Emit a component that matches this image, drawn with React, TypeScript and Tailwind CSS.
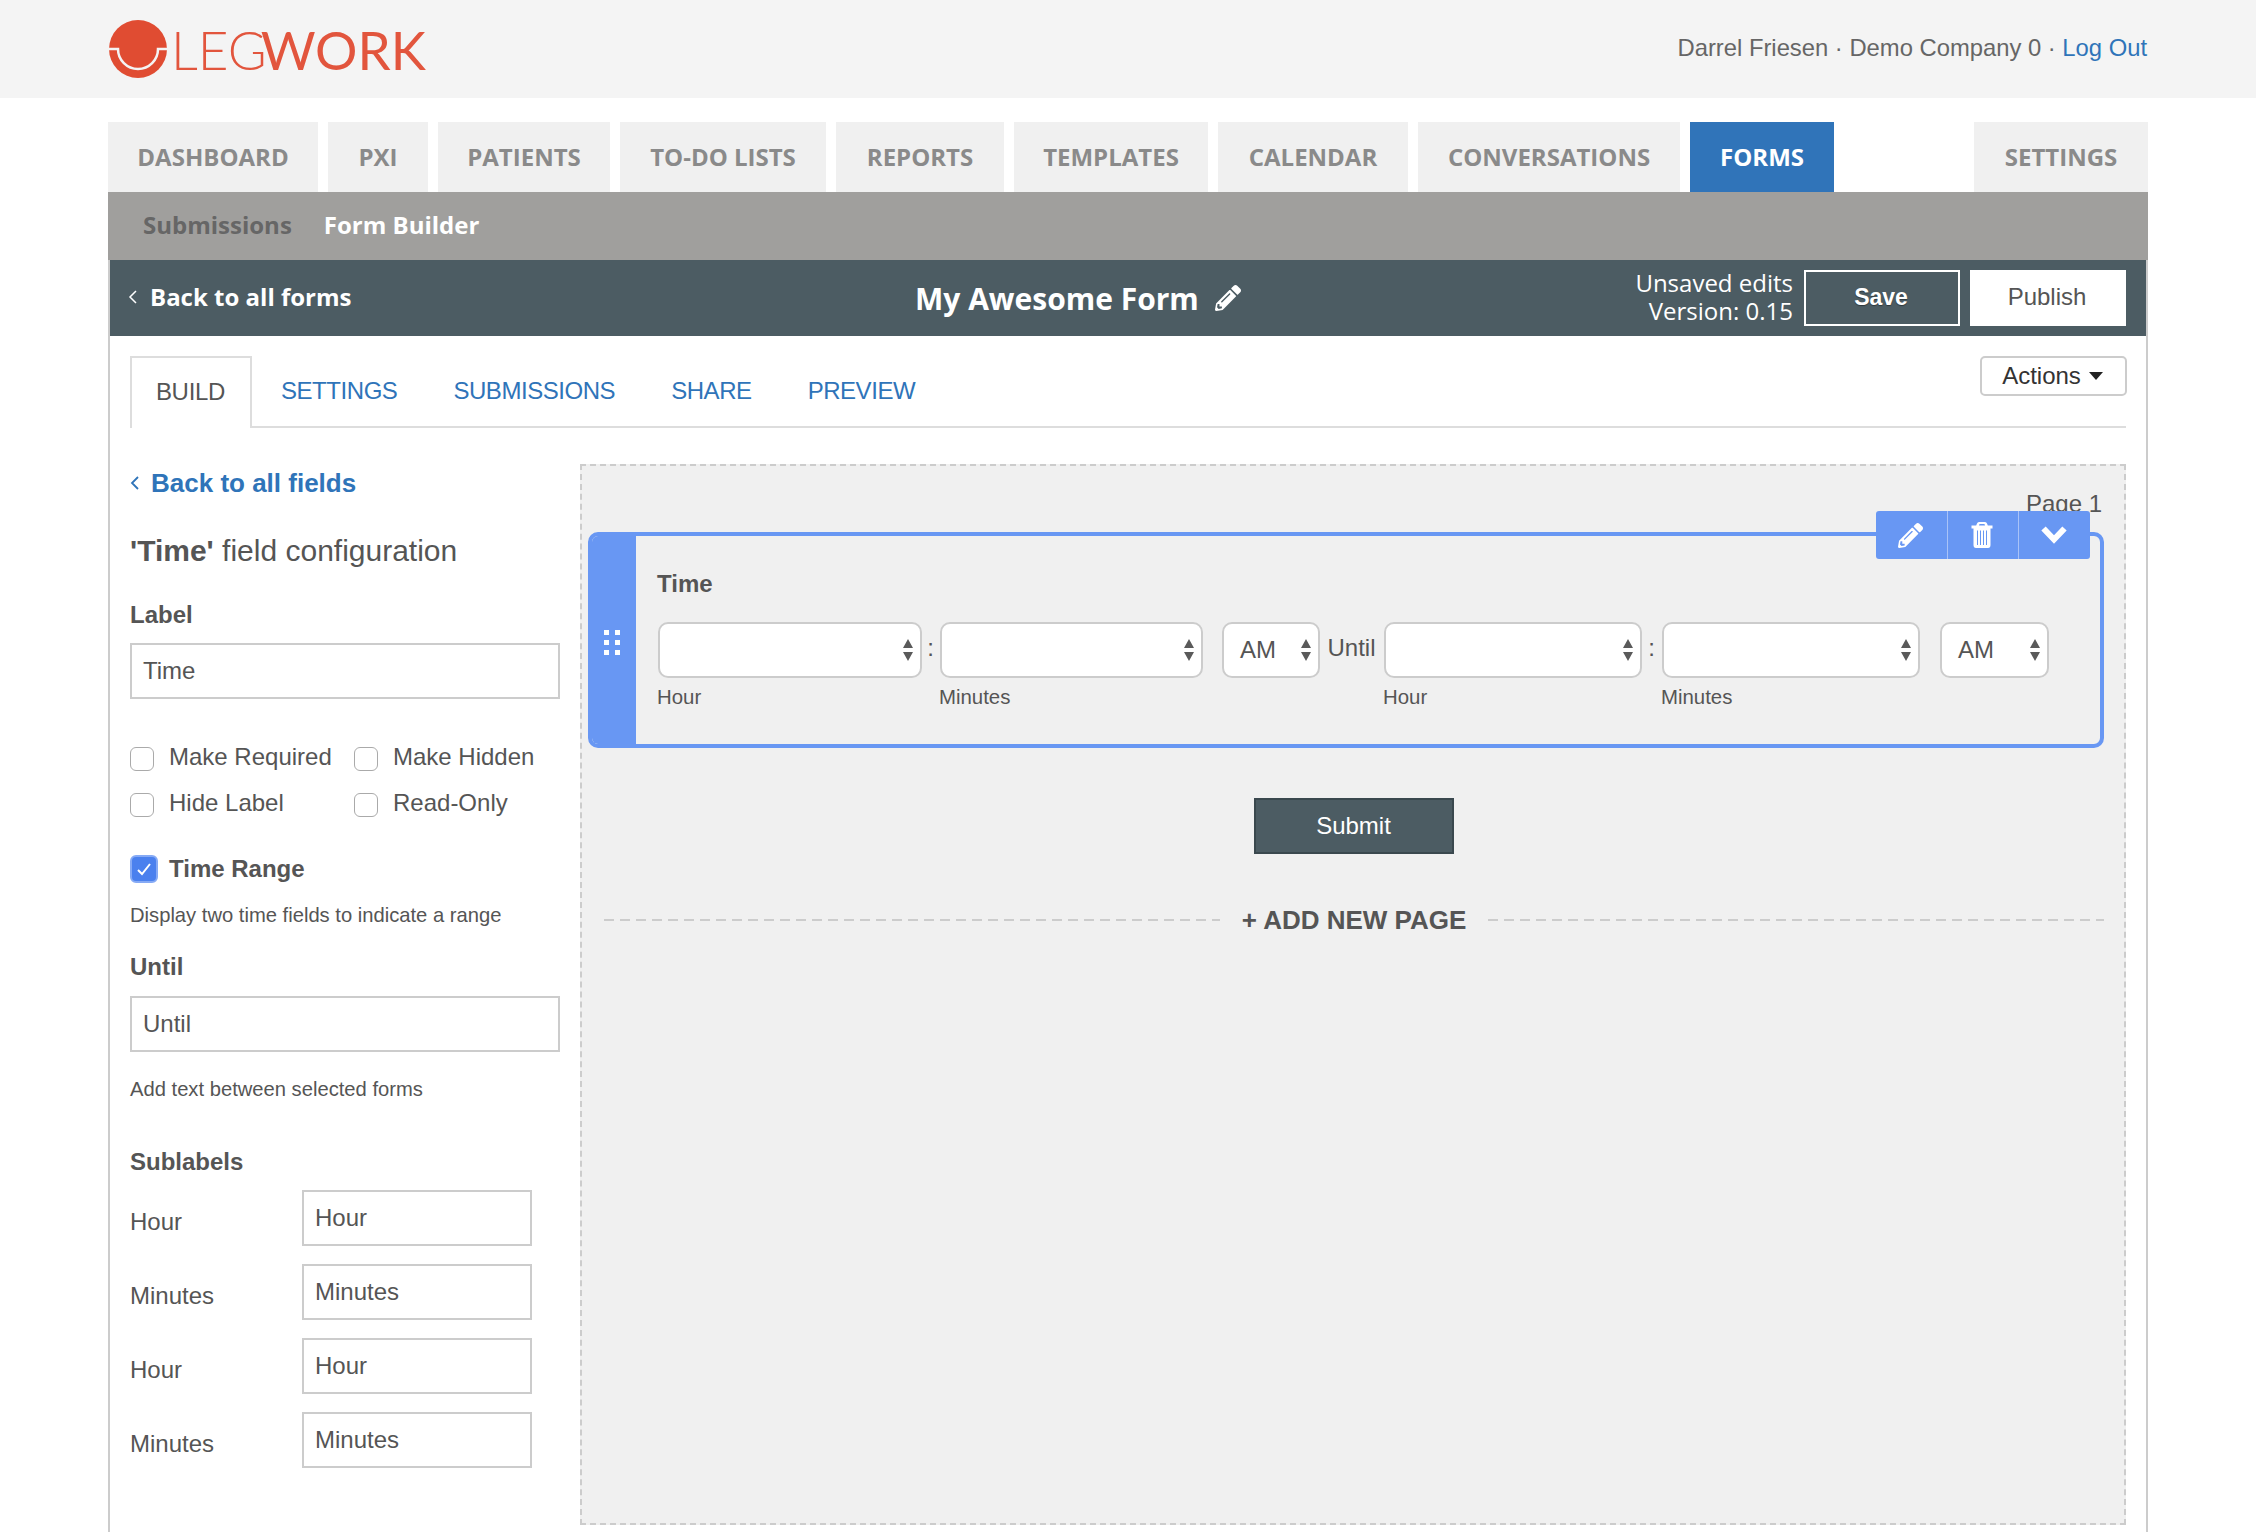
import { FaPencilAlt } from 'react-icons/fa'

const navTabs = [
  { label: 'DASHBOARD', width: 'w-[210px]' },
  { label: 'PXI', width: 'w-[100px]' },
  { label: 'PATIENTS', width: 'w-[172px]' },
  { label: 'TO-DO LISTS', width: 'w-[206px]' },
  { label: 'REPORTS', width: 'w-[168px]' },
  { label: 'TEMPLATES', width: 'w-[194px]' },
  { label: 'CALENDAR', width: 'w-[190px]' },
  { label: 'CONVERSATIONS', width: 'w-[262px]' },
]

const openSans = "font-['Open_Sans',sans-serif]"

function Logo() {
  return (
    <div className="flex items-center">
      <svg width="60" height="60" viewBox="0 0 60 60" className="shrink-0">
        <circle cx="30" cy="30" r="29" fill="#e04c32" />
        <path d="M1 30 H10 A20 20 0 0 0 50 30 H59" fill="none" stroke="#f4f4f4" strokeWidth="2.5" />
      </svg>
      <span className="ml-[3px] font-['Lato',sans-serif] text-[53px] leading-none text-[#e2553d]">
        <span className="font-light">LEG</span>
        <span className="ml-[-6px] font-normal">WORK</span>
      </span>
    </div>
  )
}

function Arrows() {
  return (
    <svg width="12" height="24" viewBox="0 0 12 24" className="shrink-0">
      <path d="M6 1 L11 10 H1 Z M6 23 L1 14 H11 Z" fill="#5a5a5a" />
    </svg>
  )
}

function Select({ width, value, label }: { width: string; value?: string; label?: string }) {
  return (
    <div className={`${width} shrink-0`}>
      <div className="ml-[1px] flex h-[56px] items-center justify-between rounded-[10px] border-2 border-[#ccc] bg-white pl-[16px] pr-[6px] text-[24px] text-[#555]">
        <span>{value}</span>
        <Arrows />
      </div>
      {label && <p className="mt-[7px] text-[20.4px] leading-[24px] text-[#555]">{label}</p>}
    </div>
  )
}

function TextBox({ value, width }: { value: string; width: string }) {
  return (
    <div className={`${width} flex h-[56px] items-center border-2 border-[#ccc] bg-white pl-[11px] text-[24px] text-[#555]`}>
      {value}
    </div>
  )
}

function Check({ label }: { label: string }) {
  return (
    <div className="flex h-[24px] items-center">
      <span className="mt-[3px] h-[24px] w-[24px] shrink-0 rounded-[6px] border border-[#aaa] bg-white" />
      <span className="ml-[15px] text-[24px] leading-none text-[#555]">{label}</span>
    </div>
  )
}

function SubRow({ label }: { label: string }) {
  return (
    <div className="flex h-[56px] items-center">
      <span className="w-[172px] pt-[8px] text-[24px] text-[#555]">{label}</span>
      <TextBox value={label} width="w-[230px]" />
    </div>
  )
}

function Sidebar() {
  return (
    <div className="w-[430px] shrink-0 text-[#555]">
      <div className="flex h-[34px] items-center text-[#2f74b9]">
        <svg width="10" height="16" viewBox="0 0 10 16" className="shrink-0">
          <path d="M8 2 L2 8 L8 14" fill="none" stroke="#2f74b9" strokeWidth="1.8" />
        </svg>
        <span className="ml-[11px] text-[26px] font-bold leading-none">Back to all fields</span>
      </div>
      <h2 className="mt-[33px] text-[30px] leading-[36px]">
        <b>'Time'</b> field configuration
      </h2>
      <p className="mt-[30px] text-[24px] font-bold leading-[32px]">Label</p>
      <div className="mt-[12px]">
        <TextBox value="Time" width="w-[430px]" />
      </div>
      <div className="mt-[46px] grid w-[430px] grid-cols-[224px_1fr] gap-y-[22px]">
        <Check label="Make Required" />
        <Check label="Make Hidden" />
        <Check label="Hide Label" />
        <Check label="Read-Only" />
      </div>
      <div className="mt-[39px] flex h-[30px] items-center">
        <span className="flex h-[28px] w-[28px] shrink-0 items-center justify-center rounded-[6px] border-2 border-[#86aaf5] bg-[#4a80ee]">
          <svg width="16" height="14" viewBox="0 0 16 14">
            <path d="M2 8 L6 12 L14 2" fill="none" stroke="white" strokeWidth="2" />
          </svg>
        </span>
        <span className="ml-[11px] text-[24px] font-bold leading-none">Time Range</span>
      </div>
      <p className="mt-[19px] text-[20.2px] leading-[24px]">Display two time fields to indicate a range</p>
      <p className="mt-[24px] text-[24px] font-bold leading-[32px]">Until</p>
      <div className="mt-[13px]">
        <TextBox value="Until" width="w-[430px]" />
      </div>
      <p className="mt-[25px] text-[20.2px] leading-[24px]">Add text between selected forms</p>
      <p className="mt-[45px] text-[24px] font-bold leading-[32px]">Sublabels</p>
      <div className="mt-[12px] flex flex-col gap-[18px]">
        <SubRow label="Hour" />
        <SubRow label="Minutes" />
        <SubRow label="Hour" />
        <SubRow label="Minutes" />
      </div>
    </div>
  )
}

function FieldCard() {
  return (
    <div className="relative ml-[6px] flex h-[216px] w-[1516px] overflow-hidden rounded-[10px] border-4 border-[#6897f3]">
      <div className="flex w-[44px] shrink-0 items-center justify-center bg-[#6897f3] pr-[4px] pt-[4px]">
        <div className="grid grid-cols-2 gap-x-[6px] gap-y-[5px]">
          {[0, 1, 2, 3, 4, 5].map(i => (
            <span key={i} className="h-[5px] w-[5px] bg-white" />
          ))}
        </div>
      </div>
      <div className="pl-[21px] pt-[32px]">
        <p className="text-[24px] font-bold leading-[32px] text-[#555]">Time</p>
        <div className="mt-[22px] flex items-start text-[#555]">
          <Select width="w-[265px]" label="Hour" />
          <span className="w-[17px] pt-[8px] text-center text-[24px]">:</span>
          <Select width="w-[264px]" label="Minutes" />
          <span className="w-[18px]" />
          <Select width="w-[99px]" value="AM" />
          <span className="w-[63px] pt-[10px] text-center text-[24px] leading-[32px]">Until</span>
          <Select width="w-[259px]" label="Hour" />
          <span className="w-[19px] pt-[8px] text-center text-[24px]">:</span>
          <Select width="w-[259px]" label="Minutes" />
          <span className="w-[19px]" />
          <Select width="w-[110px]" value="AM" />
        </div>
      </div>
    </div>
  )
}

function Toolbar() {
  return (
    <div className="absolute right-[34px] top-[45px] flex h-[48px] w-[214px] divide-x divide-[#a9c3f8] rounded-[3px] bg-[#6897f3] text-white">
      <div className="flex flex-1 items-center justify-center pr-[2px]">
        <FaPencilAlt size={25} />
      </div>
      <div className="flex flex-1 items-center justify-center pr-[2px]">
        <svg width="22" height="26" viewBox="0 0 22 26">
          <path
            d="M8 0 H14 Q15.500 0 16 1.500 L16.800 3.500 H21.500 V6.500 H19.500 V23 Q19.500 26 17 26 H5 Q2.500 26 2.500 23 V6.500 H0.500 V3.500 H5.200 L6 1.500 Q6.500 0 8 0 Z M8 3.500 H14 L13.500 2 H8.500 Z"
            fill="white"
            fillRule="evenodd"
          />
          <path d="M6.500 8.500 V23 M9.500 8.500 V23 M12.500 8.500 V23 M15.500 8.500 V23" stroke="#6897f3" strokeWidth="1" />
        </svg>
      </div>
      <div className="flex flex-1 items-center justify-center pr-[2px]">
        <svg width="28" height="20" viewBox="0 0 28 20">
          <path d="M3.500 3.500 L14 14.500 L24.500 3.500" fill="none" stroke="white" strokeWidth="6" />
        </svg>
      </div>
    </div>
  )
}

function DashLine() {
  return <span className="h-[2px] flex-1 bg-[repeating-linear-gradient(90deg,#ccc_0,#ccc_10px,transparent_10px,transparent_16px)]" />
}

function Canvas() {
  return (
    <div className="relative h-[1061px] w-[1546px] shrink-0 border-2 border-dashed border-[#ccc] bg-[#f0f0f0] text-[#555]">
      <p className="h-[66px] pr-[22px] pt-[22px] text-right text-[24px] leading-[32px]">Page 1</p>
      <FieldCard />
      <Toolbar />
      <div className="mt-[50px] flex justify-center pl-[1px]">
        <button className="h-[56px] w-[200px] border-2 border-[#3a484e] bg-[#4c5c63] text-[24px] text-white">Submit</button>
      </div>
      <div className="mt-[46px] flex items-center pl-[22px] pr-[20px]">
        <DashLine />
        <span className="px-[22px] text-[26px] font-bold leading-[40px]">+ ADD NEW PAGE</span>
        <DashLine />
      </div>
    </div>
  )
}

export default function App() {
  return (
    <div className="h-[1532px] overflow-hidden bg-white font-['Liberation_Sans',Arial,sans-serif]">
      <header className="flex h-[98px] items-center justify-between bg-[#f4f4f4] pl-[108px] pr-[109px]">
        <Logo />
        <p className="pb-[2px] text-[23.8px] text-[#666]">
          Darrel Friesen · Demo Company 0 · <span className="text-[#2f74b9]">Log Out</span>
        </p>
      </header>

      <div className="mx-[108px] mt-[24px]">
        <nav className={`flex h-[70px] gap-[10px] text-[24px] font-bold ${openSans}`}>
          {navTabs.map(tab => (
            <div key={tab.label} className={`${tab.width} flex items-center justify-center bg-[#f0f0f0] text-[#8a8a8a]`}>
              {tab.label}
            </div>
          ))}
          <div className="flex w-[144px] items-center justify-center bg-[#3074b9] text-white">FORMS</div>
          <div className="ml-auto flex w-[174px] items-center justify-center bg-[#f0f0f0] text-[#8a8a8a]">SETTINGS</div>
        </nav>

        <div className={`flex h-[68px] items-center gap-[32px] bg-[#a09f9d] pb-[2px] pl-[35px] text-[24px] font-bold ${openSans}`}>
          <span className="text-[#666]">Submissions</span>
          <span className="text-white">Form Builder</span>
        </div>

        <div className="h-[1274px] border-x-2 border-[#ccc]">
          <div className={`flex h-[76px] items-center bg-[#4c5c63] pl-[18px] pr-[20px] text-white ${openSans}`}>
            <div className="flex w-[787px] items-center pb-[2px]">
              <svg width="10" height="16" viewBox="0 0 10 16" className="shrink-0">
                <path d="M8 2 L2 8 L8 14" fill="none" stroke="white" strokeWidth="1.5" />
              </svg>
              <span className="ml-[12px] text-[24px] font-bold">Back to all forms</span>
            </div>
            <span className="text-[30px] font-bold">My Awesome Form</span>
            <FaPencilAlt size={26} className="ml-[16px]" />
            <div className="ml-auto mr-[11px] pb-[2px] text-right text-[24px] leading-[28px]">
              <p>Unsaved edits</p>
              <p>Version: 0.15</p>
            </div>
            <div className="flex h-[56px] w-[156px] items-center justify-center border-2 border-white pb-[2px] pr-[2px] font-['Liberation_Sans',sans-serif] text-[23px] font-bold [text-shadow:0_1px_1px_rgba(0,0,0,0.4)]">
              Save
            </div>
            <div className="ml-[10px] flex h-[56px] w-[156px] items-center justify-center bg-white pb-[2px] pr-[2px] font-['Liberation_Sans',sans-serif] text-[24px] text-[#555]">
              Publish
            </div>
          </div>

          <div className="relative mx-[20px] mt-[20px] flex h-[72px] items-end border-b-2 border-[#ddd] text-[24px]">
            <div className="mb-[-2px] flex h-[72px] w-[122px] items-center justify-center border-x-2 border-t-2 border-[#ddd] border-b-white bg-white pb-[2px] pr-[1px] tracking-[-0.3px] text-[#555]">
              BUILD
            </div>
            <div className="flex h-[70px] items-center gap-[56px] pb-[1px] pl-[29px] tracking-[-0.45px] text-[#2f74b9]">
              <span>SETTINGS</span>
              <span>SUBMISSIONS</span>
              <span>SHARE</span>
              <span>PREVIEW</span>
            </div>
            <div className="absolute right-[-1px] top-0 flex h-[40px] w-[147px] items-center justify-center gap-[8px] rounded-[5px] border-2 border-[#ccc] bg-white pr-[2px] text-[#333]">
              Actions
              <svg width="14" height="8" viewBox="0 0 14 8">
                <path d="M0 0 H14 L7 8 Z" fill="#222" />
              </svg>
            </div>
          </div>

          <div className="mx-[20px] mt-[36px] flex gap-[20px]">
            <div className="mt-[2px]">
              <Sidebar />
            </div>
            <Canvas />
          </div>
        </div>
      </div>
    </div>
  )
}
